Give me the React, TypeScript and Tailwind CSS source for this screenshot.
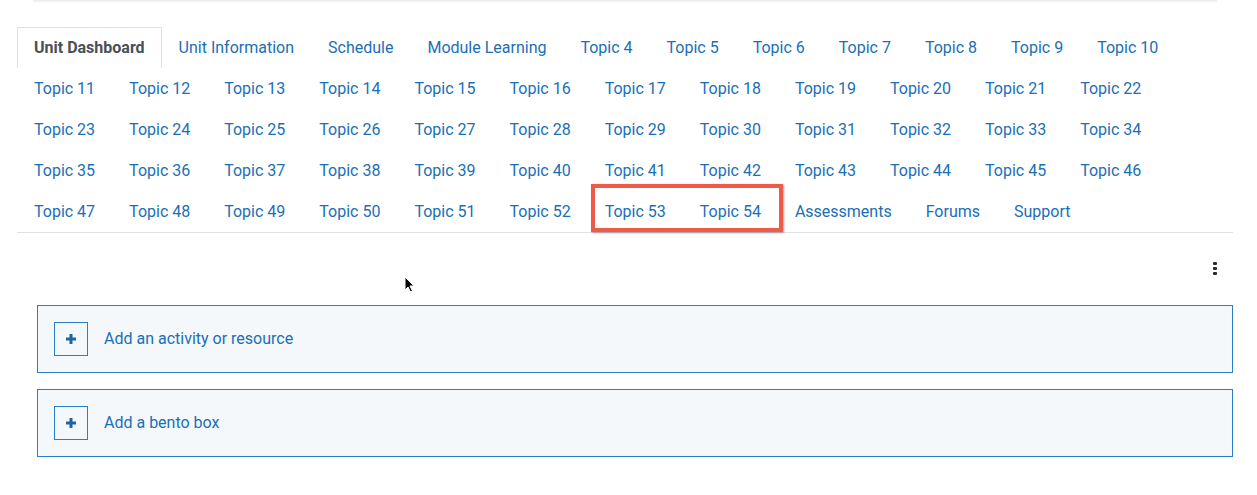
import { useState } from "react";

const topTabs = ["Unit Information", "Schedule", "Module Learning"];

const topics: string[] = [];
for (let i = 4; i <= 52; i++) topics.push(`Topic ${i}`);

const tailTabs = ["Assessments", "Forums", "Support"];

function Tab({ label, active, onClick }: { label: string; active?: boolean; onClick?: () => void }) {
  return (
    <a
      href="#"
      onClick={(e) => {
        e.preventDefault();
        onClick?.();
      }}
      className={
        active
          ? "flex h-[41px] items-center whitespace-nowrap border border-b-0 border-[#dee2e6] bg-white px-4 font-bold text-[#495057] -mb-px"
          : "flex h-[41px] items-center whitespace-nowrap border border-transparent px-4 text-[#1a6fb6]"
      }
    >
      {label}
    </a>
  );
}

function AddBox({ label }: { label: string }) {
  return (
    <div className="flex h-[68px] items-center border border-[#2a7fc2] bg-[#f5f8fb] pl-4">
      <span className="flex h-[34px] w-[34px] items-center justify-center border border-[#2a7fc2]">
        <svg width="12" height="12" viewBox="0 0 12 12">
          <path d="M6 1v10M1 6h10" stroke="#1d66a6" strokeWidth="3" />
        </svg>
      </span>
      <span className="ml-4 text-[#1a6fb6]">{label}</span>
    </div>
  );
}

export default function App() {
  const [active, setActive] = useState("Unit Dashboard");

  return (
    <div className="relative h-[495px] w-[1257px] overflow-hidden bg-white font-['Roboto',sans-serif] text-[16px]">
      <div className="ml-[33px] mr-[40px] h-[3px] bg-gradient-to-b from-[#e9e9e9] to-white" />

      <div className="px-[17px] pr-[24px] pt-[24px]">
        <nav className="flex flex-wrap border-b border-[#dee2e6]">
          <Tab label="Unit Dashboard" active={active === "Unit Dashboard"} onClick={() => setActive("Unit Dashboard")} />
          {topTabs.map((t) => (
            <Tab key={t} label={t} active={active === t} onClick={() => setActive(t)} />
          ))}
          {topics.map((t) => (
            <Tab key={t} label={t} active={active === t} onClick={() => setActive(t)} />
          ))}
          <div className="relative flex">
            <Tab label="Topic 53" active={active === "Topic 53"} onClick={() => setActive("Topic 53")} />
            <Tab label="Topic 54" active={active === "Topic 54"} onClick={() => setActive("Topic 54")} />
            <div className="pointer-events-none absolute left-[3px] right-[-5px] top-[-7px] bottom-0 border-4 border-[#f25a48] shadow-[1px_1px_2px_rgba(0,0,0,0.35)]" />
          </div>
          {tailTabs.map((t) => (
            <Tab key={t} label={t} active={active === t} onClick={() => setActive(t)} />
          ))}
        </nav>

        <div className="pl-5">
          <div className="flex h-[72px] items-start justify-end pr-4 pt-[29px]">
            <div className="flex flex-col gap-[2px]">
              <span className="h-[3px] w-[4px] rounded-[1px] bg-[#2b2b2b]" />
              <span className="h-[3px] w-[4px] rounded-[1px] bg-[#2b2b2b]" />
              <span className="h-[3px] w-[4px] rounded-[1px] bg-[#2b2b2b]" />
            </div>
          </div>
          <div className="flex flex-col gap-4">
            <AddBox label="Add an activity or resource" />
            <AddBox label="Add a bento box" />
          </div>
        </div>
      </div>

      <svg className="absolute left-[404px] top-[276px]" width="12" height="18" viewBox="0 0 12 18">
        <path d="M1 1v13l3-3 2.5 5 2-1-2.5-5H10z" fill="#000" stroke="#fff" strokeWidth="1" />
      </svg>
    </div>
  );
}
